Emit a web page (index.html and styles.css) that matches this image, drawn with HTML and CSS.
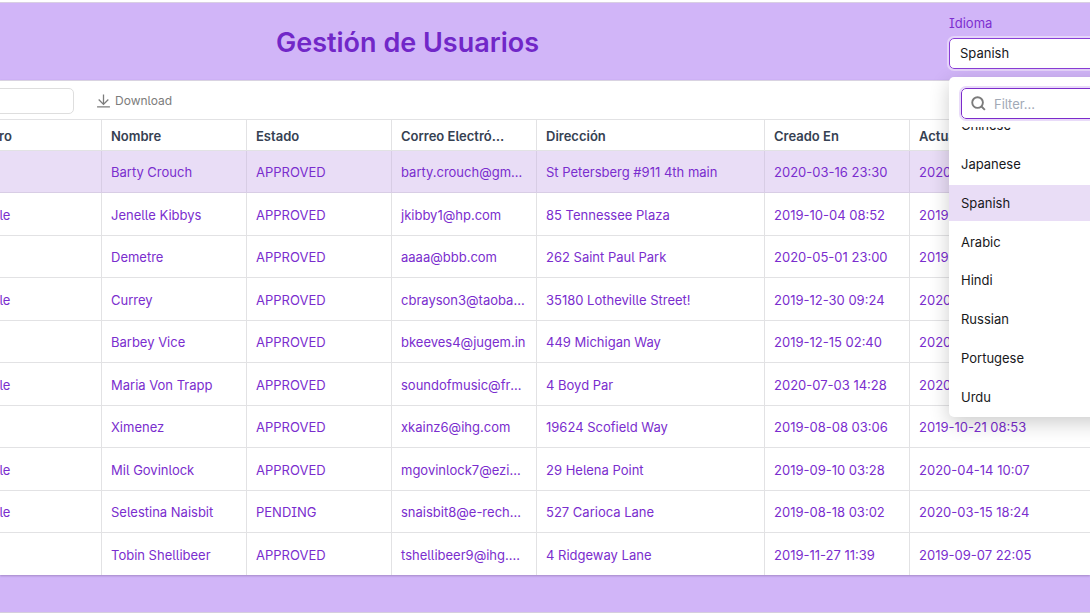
FILE: index.html
```html
<!DOCTYPE html>
<html lang="es">
<head>
<meta charset="utf-8">
<title>Gestión de Usuarios</title>
<link rel="stylesheet" href="styles.css">
</head>
<body>
<main class="page">
  <header class="header">
    <h1 class="title">Gestión de Usuarios</h1>
    <div class="language">
      <label class="language-label" for="language">Idioma</label>
      <select class="language-select" id="language"><option>Spanish</option></select>
      <div class="menu">
        <div class="filter">
          <svg class="filter-icon" viewBox="0 0 16 16" aria-hidden="true"><circle cx="7" cy="7" r="5.7"/><path d="M11.200 11.200l3.600 3.600"/></svg>
          <input class="filter-input" type="text" placeholder="Filter..." aria-label="Filter">
        </div>
        <div class="options" role="listbox" aria-label="Idioma">
          <button class="option option-clipped" role="option">Chinese</button>
          <button class="option" role="option">Japanese</button>
          <button class="option option-selected" role="option" aria-selected="true">Spanish</button>
          <button class="option" role="option">Arabic</button>
          <button class="option" role="option">Hindi</button>
          <button class="option" role="option">Russian</button>
          <button class="option" role="option">Portugese</button>
          <button class="option" role="option">Urdu</button>
        </div>
      </div>
    </div>
  </header>
  <section class="panel">
    <div class="toolbar">
      <input class="search" type="text" aria-label="Search">
      <button class="download">
        <svg class="download-icon" viewBox="0 0 14 14" aria-hidden="true"><path d="M7 .5v9M2.500 5.200L7 9.700l4.500-4.500M1 12h12"/></svg>
        Download
      </button>
    </div>
    <table class="users">
      <colgroup><col class="col"><col class="col"><col class="col"><col class="col"><col class="col-wide"><col class="col"><col></colgroup>
      <thead>
        <tr><th>Genero</th><th>Nombre</th><th>Estado</th><th>Correo Electrónico</th><th>Dirección</th><th>Creado En</th><th>Actualizado En</th></tr>
      </thead>
      <tbody>
        <tr class="selected"><td></td><td>Barty Crouch</td><td>APPROVED</td><td>barty.crouch@gmail.com</td><td>St Petersberg #911 4th main</td><td>2020-03-16 23:30</td><td>2020</td></tr>
        <tr><td>Female</td><td>Jenelle Kibbys</td><td>APPROVED</td><td>jkibby1@hp.com</td><td>85 Tennessee Plaza</td><td>2019-10-04 08:52</td><td>2019-</td></tr>
        <tr><td></td><td>Demetre</td><td>APPROVED</td><td>aaaa@bbb.com</td><td>262 Saint Paul Park</td><td>2020-05-01 23:00</td><td>2019-</td></tr>
        <tr><td>Female</td><td>Currey</td><td>APPROVED</td><td>cbrayson3@taobao.com</td><td>35180 Lotheville Street!</td><td>2019-12-30 09:24</td><td>2020</td></tr>
        <tr><td></td><td>Barbey Vice</td><td>APPROVED</td><td>bkeeves4@jugem.in</td><td>449 Michigan Way</td><td>2019-12-15 02:40</td><td>2020</td></tr>
        <tr><td>Female</td><td>Maria Von Trapp</td><td>APPROVED</td><td>soundofmusic@free.com</td><td>4 Boyd Par</td><td>2020-07-03 14:28</td><td>2020</td></tr>
        <tr><td></td><td>Ximenez</td><td>APPROVED</td><td>xkainz6@ihg.com</td><td>19624 Scofield Way</td><td>2019-08-08 03:06</td><td>2019-10-21 08:53</td></tr>
        <tr><td>Female</td><td>Mil Govinlock</td><td>APPROVED</td><td>mgovinlock7@ezine.com</td><td>29 Helena Point</td><td>2019-09-10 03:28</td><td>2020-04-14 10:07</td></tr>
        <tr><td>Female</td><td>Selestina Naisbit</td><td>PENDING</td><td>snaisbit8@e-rechnung.de</td><td>527 Carioca Lane</td><td>2019-08-18 03:02</td><td>2020-03-15 18:24</td></tr>
        <tr><td></td><td>Tobin Shellibeer</td><td>APPROVED</td><td>tshellibeer9@ihg.com</td><td>4 Ridgeway Lane</td><td>2019-11-27 11:39</td><td>2019-09-07 22:05</td></tr>
      </tbody>
    </table>
  </section>
</main>
</body>
</html>
```
FILE: styles.css
```css
* { box-sizing: border-box; }
body {
  margin: 0;
  overflow: hidden;
  background: #fff;
  color: #6d28d9;
  font-family: Inter, Roboto, sans-serif;
  font-size: 13px;
  line-height: 18px;
  font-feature-settings: "cv05", "cv08";
}
button, input, select { font: inherit; font-feature-settings: inherit; }
.page {
  margin-top: 2px;
  padding-bottom: 37px;
  overflow: hidden;
  background: #d1b5f8;
  border-top: 1px solid #d9d0e3;
  border-bottom: 1px solid #d5cedd;
}
.header {
  display: flex;
  justify-content: space-between;
  height: 77px;
  padding-left: 276px;
}
.title {
  margin: 0;
  padding-top: 22px;
  font-size: 27px;
  line-height: 36px;
  font-weight: 600;
  color: #7127c8;
}
.language {
  position: relative;
  display: flex;
  flex-direction: column;
  gap: 6px;
  flex: 0 0 240px;
  margin-right: -99px;
  padding-top: 11px;
}
.language-label { color: #7d2fd0; }
.language-select {
  height: 31px;
  padding: 0 10px 2px;
  appearance: none;
  background: #fff;
  border: 1px solid #8a3dd6;
  border-radius: 5px;
  outline: 2px solid #e5d4fa;
  color: #18181b;
}
.menu {
  position: absolute;
  top: 74px;
  left: 0;
  right: 0;
  padding-top: 11px;
  background: #fff;
  border-radius: 5px;
  box-shadow: 0 6px 20px rgba(0, 0, 0, .2);
  z-index: 2;
}
.filter {
  display: flex;
  align-items: center;
  gap: 8px;
  height: 31px;
  margin: 0 12px;
  padding: 0 9px;
  border: 1px solid #7c2bcb;
  border-radius: 5px;
  outline: 2px solid #e9dbf9;
}
.filter-icon {
  flex: none;
  width: 15px;
  height: 15px;
  fill: none;
  stroke: #7b7b7b;
  stroke-width: 2;
}
.filter-input {
  width: 100%;
  padding: 0;
  border: 0;
  outline: 0;
  background: none;
}
.filter-input::placeholder { color: #a2a9b6; opacity: 1; }
.options {
  display: flex;
  flex-direction: column;
  justify-content: space-between;
  height: 290px;
  margin-top: 8px;
  padding-bottom: 2px;
  overflow: hidden;
}
.option {
  flex: none;
  height: 36px;
  padding: 0 12px;
  border: 0;
  background: none;
  color: #18181b;
  text-align: left;
}
.option-clipped { margin-top: -20px; }
.option-selected { background: #e9ddf6; }
.panel {
  background: #fff;
  border-top: 1px solid #d9d3e1;
  box-shadow: 0 1px 2px rgba(60, 30, 90, .3);
}
.toolbar {
  display: flex;
  align-items: center;
  gap: 22px;
  height: 38px;
  padding-top: 2px;
}
.search {
  width: 218px;
  height: 26px;
  margin-left: -144px;
  border: 1px solid #dedede;
  border-radius: 5px;
}
.download {
  display: flex;
  align-items: center;
  gap: 4px;
  padding: 0;
  border: 0;
  background: none;
  color: #7c7c7c;
  font-size: 12px;
}
.download-icon {
  width: 15px;
  height: 15px;
  fill: none;
  stroke: currentColor;
  stroke-width: 1.200;
}
.users {
  width: calc(100% + 44px);
  margin-left: -44px;
  table-layout: fixed;
  border-collapse: separate;
  border-spacing: 0;
}
.col { width: 145px; }
.col-wide { width: 228px; }
.users th, .users td {
  height: 42px;
  padding: 1px 10px 0 9px;
  overflow: hidden;
  text-align: left;
  text-overflow: ellipsis;
  white-space: nowrap;
  border-left: 1px solid #e2e2e4;
  border-bottom: 1px solid #e2e2e4;
  color: #7a2dce;
}
.users th {
  height: 32px;
  padding-right: 28px;
  border-top: 1px solid #e2e2e4;
  color: #364152;
  font-weight: 600;
}
.users tr:nth-child(even) td { height: 43px; }
.users tr:last-child td { border-bottom: 0; height: 42px; }
.users .selected td { background: #e9ddf6; border-color: #d8cde5; }
```
